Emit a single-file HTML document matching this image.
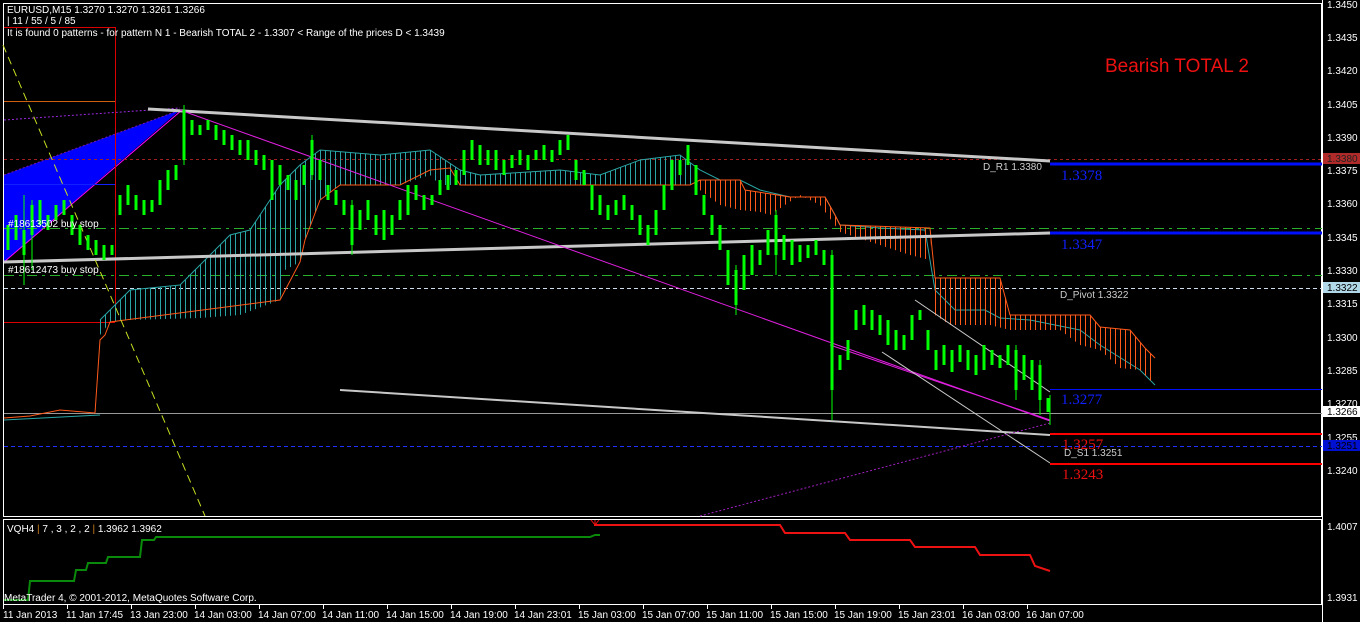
<!DOCTYPE html>
<html><head><meta charset="utf-8"><style>
html,body{margin:0;padding:0;background:#000;width:1360px;height:622px;overflow:hidden}
svg{display:block}
text{font-family:"Liberation Sans",sans-serif;font-size:10px;fill:#fff}
.ax{font-size:10px;fill:#fff}
.big{font-family:"Liberation Serif",serif;font-size:15px}
</style></head><body>
<svg width="1360" height="622" viewBox="0 0 1360 622">
<defs>
<pattern id="hc" width="5" height="10" patternUnits="userSpaceOnUse"><rect x="0" y="0" width="1" height="10" fill="#2aa5a5"/></pattern>
<pattern id="ho" width="5" height="10" patternUnits="userSpaceOnUse"><rect x="0" y="0" width="1" height="10" fill="#ff5a1a"/></pattern>
</defs>
<!-- frames -->
<rect x="3.5" y="3.5" width="1318" height="513" fill="none" stroke="#fff"/>
<rect x="3.5" y="519.5" width="1318" height="85" fill="none" stroke="#fff"/>
<line x1="1322.5" y1="0" x2="1322.5" y2="622" stroke="#fff"/>

<!-- blue wedge -->
<polygon points="4,175 180,110 4,262" fill="#0000ff"/>
<line x1="4" y1="175" x2="180" y2="110" stroke="#7a1aa0" stroke-width="1" stroke-dasharray="2,2"/>
<line x1="4" y1="120" x2="180" y2="108" stroke="#9a2ae0" stroke-dasharray="2,2"/>
<line x1="4" y1="262" x2="182" y2="110" stroke="#ff00ff"/>

<!-- red box -->
<line x1="4" y1="27.5" x2="115" y2="27.5" stroke="#d00"/>
<line x1="115.5" y1="27" x2="115.5" y2="322" stroke="#d00"/>
<line x1="4" y1="101.5" x2="115" y2="101.5" stroke="#d06010"/>
<line x1="4" y1="184.5" x2="115" y2="184.5" stroke="#1020ff"/>
<line x1="4" y1="322.5" x2="115" y2="322.5" stroke="#d00"/>

<!-- horizontal levels -->
<line x1="4" y1="159.5" x2="1322" y2="159.5" stroke="#a02020" stroke-dasharray="3,3"/>
<line x1="4" y1="228.5" x2="1322" y2="228.5" stroke="#2ab02a" stroke-dasharray="10,5,3,5"/>
<line x1="4" y1="275.5" x2="1322" y2="275.5" stroke="#2ab02a" stroke-dasharray="10,5,3,5"/>
<line x1="4" y1="288.5" x2="1322" y2="288.5" stroke="#cde" stroke-dasharray="4,3"/>
<line x1="4" y1="413.5" x2="1322" y2="413.5" stroke="#999"/>
<line x1="4" y1="446.5" x2="1322" y2="446.5" stroke="#2030ff" stroke-dasharray="4,3"/>
<line x1="1050" y1="164" x2="1322" y2="164" stroke="#0010ff" stroke-width="3"/>
<line x1="1050" y1="233" x2="1322" y2="233" stroke="#0010ff" stroke-width="3"/>
<line x1="1050" y1="389.5" x2="1322" y2="389.5" stroke="#0010ff"/>
<line x1="1050" y1="434" x2="1322" y2="434" stroke="#ff0000" stroke-width="2"/>
<line x1="1050" y1="464" x2="1322" y2="464" stroke="#ff0000" stroke-width="2"/>

<!-- clouds -->
<polygon points="100,320 130,290 180,285 200,265 230,235 250,230 270,200 280,185 300,165 320,150 380,155 430,150 460,170 480,175 560,170 600,175 640,160 680,155 700,170 700,185 440,185 430,175 400,185 340,185 320,200 305,240 300,262 285,270 280,300 240,315 200,318 130,320 110,322 100,335" fill="url(#hc)"/>
<polyline points="100,320 130,290 180,285 200,265 230,235 250,230 270,200 280,185 300,165 320,150 380,155 430,150 460,170 480,175 560,170 600,175 640,160 680,155 700,170 720,180 740,180 760,190 790,197 825,197 835,215 840,225 880,228 925,230 935,290 955,310 985,310 1000,318 1030,320 1080,330 1100,345 1140,370 1155,385" fill="none" stroke="#2aa5a5"/>
<polygon points="700,180 740,180 745,190 760,192 790,197 825,197 835,215 840,225 930,228 930,260 910,255 880,245 840,232 820,205 800,195 770,215 760,212 740,210 720,205 700,190" fill="url(#ho)"/>
<polygon points="930,230 935,278 1000,278 1010,315 1090,315 1100,327 1130,330 1145,348 1155,358 1155,385 1140,370 1120,368 1100,350 1080,345 1060,330 1010,330 990,325 950,325 935,315" fill="url(#ho)"/>
<polyline points="4,418 30,416 60,410 95,413 100,340 105,335 110,322 280,300 300,262 305,240 320,200 340,185 400,185 430,170 450,168 460,185 690,185 700,180 740,180 745,190 790,197 825,197 835,215 840,225 930,228 935,278 1000,278 1010,315 1090,315 1100,327 1130,330 1145,348 1155,358" fill="none" stroke="#ff5a1a"/>
<line x1="4" y1="420" x2="100" y2="415" stroke="#2aa5a5"/>

<!-- trendlines -->
<line x1="148" y1="109" x2="1050" y2="161" stroke="#c8c8c8" stroke-width="3"/>
<line x1="4" y1="262" x2="1050" y2="233" stroke="#c8c8c8" stroke-width="3"/>
<line x1="340" y1="390" x2="1050" y2="435" stroke="#c8c8c8" stroke-width="2"/>
<line x1="180" y1="110" x2="1050" y2="421" stroke="#e020e0"/>
<line x1="830" y1="345" x2="1050" y2="420" stroke="#e020e0"/>
<line x1="915" y1="300" x2="1050" y2="392" stroke="#ccc"/>
<line x1="882" y1="352" x2="1050" y2="463" stroke="#ccc"/>
<line x1="700" y1="516" x2="1050" y2="423" stroke="#a020c0" stroke-dasharray="2,2"/>
<line x1="3" y1="45" x2="205" y2="516" stroke="#c8e020" stroke-dasharray="8,5"/>

<!-- candles -->
<path stroke="#00ff00" stroke-width="3" fill="none" d="M8,225V250M16,215V240M24,230V255M32,205V235M40,200V225M48,215V230M56,205V220M64,200V215M72,215V235M80,225V245M88,235V250M96,240V255M104,245V260M112,245V255M120,195V215M128,185V205M136,195V210M144,200V215M152,200V212M160,180V205M168,170V190M176,165V180M184,110V160M192,120V135M200,125V135M208,120V130M216,125V140M224,130V145M232,135V150M240,140V155M248,140V160M256,150V165M264,155V170M272,160V200M280,165V185M288,175V190M296,180V200M304,165V185M312,140V175M320,160V180M328,185V200M336,190V205M344,200V215M352,205V245M360,210V230M368,200V220M376,215V235M384,210V240M392,215V235M400,200V220M408,185V215M416,185V200M424,195V210M432,195V205M440,180V195M448,175V190M456,170V185M464,150V175M472,140V160M480,145V165M488,150V165M496,150V170M504,160V175M512,155V168M520,150V165M528,155V170M536,150V160M544,145V160M552,150V162M560,140V155M568,135V150M576,160V180M584,170V185M592,185V210M600,195V215M608,205V220M616,200V215M624,195V210M632,205V220M640,215V235M648,225V245M656,210V235M664,185V210M672,160V190M680,160V175M688,145V165M696,165V195M704,195V215M712,215V235M720,225V250M728,250V285M736,270V305M744,255V290M752,245V275M760,250V265M768,230V255M776,215V255M784,235V260M792,240V265M800,245V262M808,245V258M816,240V255M824,250V265M832,255V390M840,355V370M848,340V360M856,310V330M864,305V325M872,310V330M880,315V335M888,320V345M896,330V350M904,335V350M912,315V340M920,310V320M928,330V350M936,350V370M944,345V365M952,350V372M960,345V362M968,350V370M976,355V375M984,345V370M992,350V365M1000,355V368M1008,345V365M1016,350V390M1024,355V380M1032,360V390M1040,365V400M1048,398V412"/>
<path stroke="#00ff00" stroke-width="1" fill="none" d="M24,195V285M32,200V270M184,105V165M312,135V180M352,200V255M736,265V315M776,210V275M832,250V420M1016,345V400M1040,360V415M1050,395V425"/>

<!-- texts -->
<text x="7" y="13">EURUSD,M15  1.3270 1.3270 1.3261 1.3266</text>
<text x="7" y="24"> | 11 / 55 / 5 / 85</text>
<text x="7" y="36">It is found 0 patterns  -  for pattern N 1 - Bearish TOTAL 2  - 1.3307 &lt; Range of the prices D &lt; 1.3439</text>
<text x="1105" y="72" style="font-size:19px;fill:#ee1111">Bearish TOTAL 2</text>
<text x="8" y="227">#18613502 buy stop</text>
<text x="8" y="273">#18612473 buy stop</text>
<text x="983" y="170" style="fill:#ccc">D_R1 1.3380</text>
<text x="1060" y="298" style="fill:#ccc">D_Pivot 1.3322</text>
<text x="1064" y="456" style="fill:#ccc">D_S1 1.3251</text>
<text x="1061" y="180" class="big" style="fill:#1020ff">1.3378</text>
<text x="1061" y="249" class="big" style="fill:#1020ff">1.3347</text>
<text x="1061" y="404" class="big" style="fill:#1020ff">1.3277</text>
<text x="1062" y="449" class="big" style="fill:#ee1010">1.3257</text>
<text x="1062" y="479" class="big" style="fill:#ee1010">1.3243</text>

<!-- price axis -->
<g class="ax">
<text x="1327" y="8">1.3450</text>
<text x="1327" y="41">1.3435</text>
<text x="1327" y="74">1.3420</text>
<text x="1327" y="108">1.3405</text>
<text x="1327" y="141">1.3390</text>
<text x="1327" y="174">1.3375</text>
<text x="1327" y="207">1.3360</text>
<text x="1327" y="241">1.3345</text>
<text x="1327" y="274">1.3330</text>
<text x="1327" y="307">1.3315</text>
<text x="1327" y="341">1.3300</text>
<text x="1327" y="374">1.3285</text>
<text x="1327" y="407">1.3270</text>
<text x="1327" y="441">1.3255</text>
<text x="1327" y="474">1.3240</text>
<text x="1327" y="530">1.4007</text>
<text x="1327" y="601">1.3931</text>
</g>
<rect x="1323" y="153" width="37" height="11" fill="#b02a2a"/><text x="1327" y="162" style="fill:#222">1.3380</text>
<rect x="1323" y="282" width="37" height="11" fill="#b0d8e8"/><text x="1327" y="291" style="fill:#000">1.3322</text>
<rect x="1323" y="406" width="37" height="11" fill="#fff"/><text x="1327" y="415" style="fill:#000">1.3266</text>
<rect x="1323" y="440" width="37" height="11" fill="#0010d0"/><text x="1327" y="449" style="fill:#000">1.3251</text>

<!-- sub window -->
<polyline points="4,600 28,600 30,581 74,581 76,570 86,570 88,563 106,563 108,557 140,557 142,540 154,540 156,537 590,537 595,535 600,535" fill="none" stroke="#0a8a0a" stroke-width="2"/>
<polyline points="594,525 780,525 785,533 845,533 850,540 910,540 915,547 975,547 980,555 1030,555 1035,566 1050,571" fill="none" stroke="#ee1111" stroke-width="2"/>
<path d="M591,520L595,525L599,520M595,520V526" stroke="#ee1111" fill="none"/>
<text x="7" y="532">VQH4 <tspan fill="#d08020">|</tspan> 7 , 3 , 2 , 2 <tspan fill="#d08020">|</tspan> 1.3962 1.3962</text>
<text x="4" y="601">MetaTrader 4, © 2001-2012, MetaQuotes Software Corp.</text>

<!-- time axis -->
<g class="ax">
<text x="3" y="618">11 Jan 2013</text>
<text x="66" y="618">11 Jan 17:45</text>
<text x="130" y="618">13 Jan 23:00</text>
<text x="194" y="618">14 Jan 03:00</text>
<text x="258" y="618">14 Jan 07:00</text>
<text x="322" y="618">14 Jan 11:00</text>
<text x="386" y="618">14 Jan 15:00</text>
<text x="450" y="618">14 Jan 19:00</text>
<text x="514" y="618">14 Jan 23:01</text>
<text x="578" y="618">15 Jan 03:00</text>
<text x="642" y="618">15 Jan 07:00</text>
<text x="706" y="618">15 Jan 11:00</text>
<text x="770" y="618">15 Jan 15:00</text>
<text x="834" y="618">15 Jan 19:00</text>
<text x="898" y="618">15 Jan 23:01</text>
<text x="962" y="618">16 Jan 03:00</text>
<text x="1026" y="618">16 Jan 07:00</text>
</g>
<path stroke="#fff" d="M3.5,605V609M67.5,605V609M131.5,605V609M195.5,605V609M259.5,605V609M323.5,605V609M387.5,605V609M451.5,605V609M515.5,605V609M579.5,605V609M643.5,605V609M707.5,605V609M771.5,605V609M835.5,605V609M899.5,605V609M963.5,605V609M1027.5,605V609"/>
</svg>
</body></html>
